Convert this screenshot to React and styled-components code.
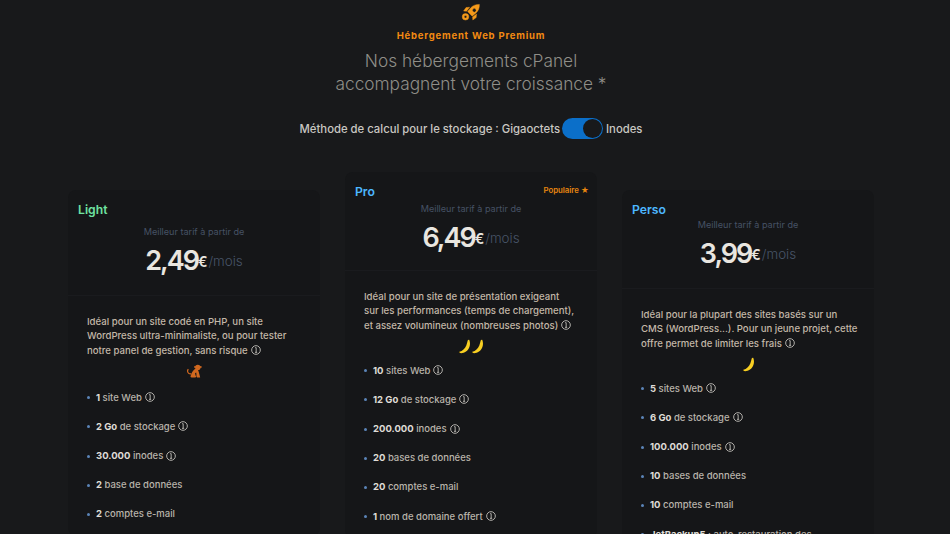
import React from "react";
import styled, { createGlobalStyle } from "styled-components";

const GlobalStyle = createGlobalStyle`
  html, body {
    margin: 0;
    height: 534px;
    overflow: hidden;
    background: #18191b;
    font-family: Inter, "Open Sans", "Liberation Sans", sans-serif;
  }
`;

const Page = styled.div`
  width: 942px;
  height: 534px;
  overflow: hidden;
  display: flex;
  flex-direction: column;
  align-items: center;
`;

const RocketWrap = styled.div`
  height: 23px;
  margin-top: 2px;
  color: #f59a1a;
`;

const Eyebrow = styled.div`
  margin-top: 4px;
  font-size: 9.5px;
  line-height: 14px;
  font-weight: 700;
  letter-spacing: 0.8px;
  color: #f28a12;
`;

const Title = styled.h1`
  margin: 6px 0 0;
  font-size: 17.3px;
  line-height: 23px;
  font-weight: 300;
  text-align: center;
  color: #8f8e88;
`;

const StorageRow = styled.div`
  margin-top: 23px;
  height: 22px;
  display: flex;
  align-items: center;
  gap: 2px;
  font-size: 11.3px;
  font-weight: 500;
  color: #c9c7c2;
`;

const Switch = styled.div`
  width: 41px;
  height: 21px;
  margin-right: 1px;
  box-sizing: border-box;
  padding: 1px;
  border-radius: 11px;
  background: #0b6fc9;
  display: flex;
  justify-content: flex-end;
`;

const Knob = styled.div`
  width: 19px;
  height: 19px;
  border-radius: 50%;
  background: #18191b;
`;

const Plans = styled.div`
  width: 806px;
  margin-top: 33px;
  display: grid;
  grid-template-columns: repeat(3, 252px);
  column-gap: 25px;
  align-items: start;
`;

const Card = styled.section`
  margin-top: ${(p) => (p.$raised ? "0" : "18px")};
  border-radius: 8px;
  background: #151618;
`;

const CardHead = styled.header`
  height: ${(p) => p.$height}px;
  box-sizing: border-box;
  padding: 13px 10px 0;
  border-bottom: 1px solid #1a1b1e;
  text-align: center;
`;

const NameRow = styled.div`
  display: flex;
  justify-content: space-between;
  align-items: flex-start;
`;

const PlanName = styled.h2`
  margin: 0;
  font-size: 12.2px;
  line-height: 14px;
  font-weight: 600;
  color: ${(p) => p.$color};
`;

const Popular = styled.span`
  display: flex;
  align-items: center;
  gap: 2px;
  margin-right: -2px;
  font-size: 7.8px;
  line-height: 11px;
  font-weight: 600;
  color: #e8860f;
`;

const FromLabel = styled.div`
  margin-top: ${(p) => p.$gap}px;
  font-size: 9.1px;
  line-height: 12px;
  color: #465265;
`;

const PriceRow = styled.div`
  margin-top: 5px;
  display: flex;
  justify-content: center;
  align-items: center;
  color: #e9e6e0;
`;

const Amount = styled.span`
  font-size: 27px;
  line-height: 36px;
  font-weight: 600;
  letter-spacing: -2px;
`;

const Euro = styled.span`
  font-size: 14px;
  font-weight: 600;
`;

const Per = styled.span`
  margin-left: 1px;
  font-size: 13.4px;
  font-weight: 300;
  color: #475467;
`;

const CardBody = styled.div`
  padding: 19px 19px 0;
`;

const Intro = styled.p`
  margin: 0;
  font-size: 9.6px;
  line-height: 14.4px;
  font-weight: 500;
  color: #c3b8a8;
  white-space: nowrap;
`;

const Mascot = styled.div`
  height: 16px;
  margin-top: 6px;
  display: flex;
  justify-content: center;
`;

const Features = styled.ul`
  margin: ${(p) => p.$top}px 0 0;
  padding: 0;
  list-style: none;
`;

const Feature = styled.li`
  display: flex;
  align-items: center;
  height: 14px;
  margin-bottom: 15.2px;
  font-size: 9.5px;
  font-weight: 500;
  white-space: nowrap;
  color: #b9b4ab;

  &::before {
    content: "";
    width: 3px;
    height: 3px;
    margin: 1px 6px 0 0;
    border-radius: 50%;
    background: #5b84b8;
  }

  b {
    font-weight: 700;
    color: #dfdcd6;
    margin-right: 2.5px;
  }
`;

const InfoSvg = styled.svg`
  width: 10px;
  height: 10px;
  margin-left: 3px;
  vertical-align: -1.5px;
  flex: none;
  color: #cfccc6;
`;

const Info = () => (
  <InfoSvg viewBox="0 0 12 12" fill="none" stroke="currentColor">
    <circle cx="6" cy="6" r="5.2" strokeWidth="1" />
    <path d="M5 3.2h1.2v5.4M4.8 8.8h2.6" strokeWidth="1" />
  </InfoSvg>
);

const Rocket = () => (
  <svg width="22" height="22" viewBox="0 0 22 22" fill="currentColor" stroke="currentColor" strokeWidth="0.4">
    <path d="M19.4 2.4c-3.6-.2-6.8 1.2-8.8 3.6L7.6 9.6l4.6 4.6 3.6-3c2.4-2 3.8-5.2 3.6-8.8zM13 7a1.8 1.8 0 1 1 2.6 2.6A1.8 1.8 0 0 1 13 7z" fillRule="evenodd" />
    <path d="M9.6 5.2 6 5.6 3.6 9l3 .2zM16.6 12l-.4 3.6-3.4 2.4-.2-3z" />
    <path d="M5.5 11.5a3.3 3.3 0 1 0 .01 6.6 3.3 3.3 0 0 0-.01-6.6zm0 2a1.3 1.3 0 1 1-.01 2.6 1.3 1.3 0 0 1 .01-2.6z" fillRule="evenodd" />
  </svg>
);

const Banana = () => (
  <svg width="13" height="16" viewBox="0 0 13 16">
    <path d="M11.4 1.2c1.6 4.6-.2 9.2-3.4 11.4-2 1.4-4.4 1.8-6.4 1.4-.9-.2-.9-1-.1-1.2 3-.7 5.4-3 6.8-6.2.6-1.5 1-3.2 1.4-5 .2-.8 1.4-1.2 1.7-.4z" fill="#f8cf22" />
    <path d="M1.6 14c-.9-.2-.9-1-.1-1.2.7.3.8.9.1 1.2z" fill="#6b5208" />
  </svg>
);

// singe assis : tete a droite, queue qui remonte a gauche
const Monkey = () => (
  <svg width="17" height="15" viewBox="0 0 17 15" fill="#d0681f">
    <circle cx="11.8" cy="3.4" r="2.7" />
    <circle cx="9" cy="3" r="0.9" />
    <circle cx="14.8" cy="3" r="0.9" />
    <path d="M8.6 5.2c1.4-.5 3.2.1 3.8 1.6l.9 3.2.9 3.6H11l-.3-1.6-1.2 1.6H5.6c-.9 0-1.3-.8-1-1.5l.7-1.9c.5-1.4 1.4-3.6 3.3-5z" />
    <path d="M5.2 10.6C3.2 10.8 1.4 9.6 1 7.6.8 6.4 1.2 5.4 2 4.8l.8.9c-.5.4-.7 1-.6 1.7.2 1.2 1.4 2 3.2 1.9z" />
    <path d="M10.2 8.4l.4 3.4h-1l-.6-2.6z" fill="#151618" />
  </svg>
);

const plans = [
  {
    name: "Light",
    color: "#6fe3a1",
    headHeight: 106,
    labelGap: 9,
    price: "2,49",
    featuresTop: 10,
    lines: [
      "Idéal pour un site codé en PHP, un site",
      "WordPress ultra-minimaliste, ou pour tester",
      "notre panel de gestion, sans risque",
    ],
    mascot: "monkey",
    features: [
      ["1", "site Web", true],
      ["2 Go", "de stockage", true],
      ["30.000", "inodes", true],
      ["2", "base de données", false],
      ["2", "comptes e-mail", false],
    ],
  },
  {
    name: "Pro",
    color: "#4db8ff",
    popular: true,
    headHeight: 99,
    labelGap: 4,
    price: "6,49",
    featuresTop: 8,
    lines: [
      "Idéal pour un site de présentation exigeant",
      "sur les performances (temps de chargement),",
      "et assez volumineux (nombreuses photos)",
    ],
    mascot: "bananas",
    features: [
      ["10", "sites Web", true],
      ["12 Go", "de stockage", true],
      ["200.000", "inodes", true],
      ["20", "bases de données", false],
      ["20", "comptes e-mail", false],
      ["1", "nom de domaine offert", true],
    ],
  },
  {
    name: "Perso",
    color: "#4db8ff",
    headHeight: 99,
    labelGap: 2,
    price: "3,99",
    featuresTop: 8,
    lines: [
      "Idéal pour la plupart des sites basés sur un",
      "CMS (WordPress...). Pour un jeune projet, cette",
      "offre permet de limiter les frais",
    ],
    mascot: "banana",
    features: [
      ["5", "sites Web", true],
      ["6 Go", "de stockage", true],
      ["100.000", "inodes", true],
      ["10", "bases de données", false],
      ["10", "comptes e-mail", false],
      ["JetBackup5", ": auto-restauration des", false],
    ],
  },
];

const PlanCard = ({ plan }) => (
  <Card $raised={plan.popular}>
    <CardHead $height={plan.headHeight}>
      <NameRow>
        <PlanName $color={plan.color}>{plan.name}</PlanName>
        {plan.popular && <Popular>Populaire ★</Popular>}
      </NameRow>
      <FromLabel $gap={plan.labelGap}>Meilleur tarif à partir de</FromLabel>
      <PriceRow>
        <Amount>{plan.price}</Amount>
        <Euro>€</Euro>
        <Per>/mois</Per>
      </PriceRow>
    </CardHead>
    <CardBody>
      <Intro>
        {plan.lines[0]}
        <br />
        {plan.lines[1]}
        <br />
        {plan.lines[2]}
        <Info />
      </Intro>
      <Mascot>
        {plan.mascot === "monkey" && <Monkey />}
        {plan.mascot === "bananas" && (
          <>
            <Banana />
            <Banana />
          </>
        )}
        {plan.mascot === "banana" && <Banana />}
      </Mascot>
      <Features $top={plan.featuresTop}>
        {plan.features.map(([strong, rest, info]) => (
          <Feature key={strong + rest}>
            <b>{strong}</b>
            {rest}
            {info && <Info />}
          </Feature>
        ))}
      </Features>
    </CardBody>
  </Card>
);

export default function App() {
  return (
    <Page>
      <GlobalStyle />
      <RocketWrap>
        <Rocket />
      </RocketWrap>
      <Eyebrow>Hébergement Web Premium</Eyebrow>
      <Title>
        Nos hébergements cPanel
        <br />
        accompagnent votre croissance *
      </Title>
      <StorageRow>
        Méthode de calcul pour le stockage : Gigaoctets
        <Switch>
          <Knob />
        </Switch>
        Inodes
      </StorageRow>
      <Plans>
        {plans.map((plan) => (
          <PlanCard key={plan.name} plan={plan} />
        ))}
      </Plans>
    </Page>
  );
}
